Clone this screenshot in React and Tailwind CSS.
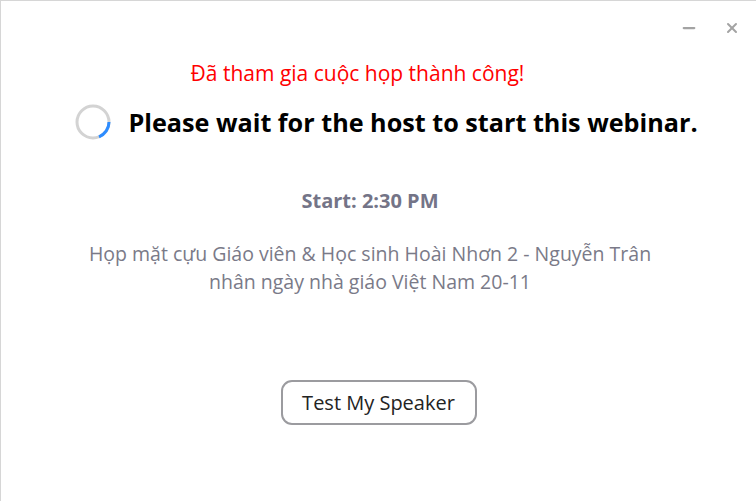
import { Minus, X } from "lucide-react";

const Spinner = () => (
  <svg width="36" height="36" viewBox="0 0 36 36">
    <circle cx="18" cy="18" r="16" fill="none" stroke="#d3d3d3" strokeWidth="3" />
    <path
      d="M34 18 A16 16 0 0 1 24 32.8"
      fill="none"
      stroke="#2d8cff"
      strokeWidth="3"
    />
  </svg>
);

const App = () => {
  return (
    <div
      className="w-[756px] h-[501px] bg-white border-t border-l border-[#d6d6d6] relative overflow-hidden"
      style={{ fontFamily: '"Open Sans", "Noto Sans", sans-serif' }}
    >
      {/* Window controls */}
      <div className="absolute top-[18px] right-[16px] flex items-center gap-[26px] text-[#a3a3a3]">
        <Minus size={18} strokeWidth={3} />
        <X size={16} strokeWidth={3} />
      </div>

      <div className="flex flex-col items-center">
        <p className="mt-[59px] ml-[-42px] text-[21px] leading-[26px] text-[#ff0000]">
          Đã tham gia cuộc họp thành công!
        </p>

        <div className="mt-[18px] ml-[16px] flex items-center gap-[17px]">
          <Spinner />
          <h1 className="text-[25.2px] leading-[32px] font-bold text-black">
            Please wait for the host to start this webinar.
          </h1>
        </div>

        <p className="mt-[49px] ml-[-17px] text-[20px] leading-[24px] font-bold text-[#747487]">
          Start: 2:30 PM
        </p>

        <div className="mt-[27px] ml-[-17px] text-center text-[19.5px] leading-[28px] text-[#7a7a88]">
          <p>Họp mặt cựu Giáo viên &amp; Học sinh Hoài Nhơn 2 - Nguyễn Trân</p>
          <p>nhân ngày nhà giáo Việt Nam 20-11</p>
        </div>

        <button className="mt-[84px] w-[196px] h-[45px] rounded-[11px] border-2 border-[#9b9b9f] bg-white text-[20px] text-[#232323]">
          Test My Speaker
        </button>
      </div>
    </div>
  );
};

export default App;
